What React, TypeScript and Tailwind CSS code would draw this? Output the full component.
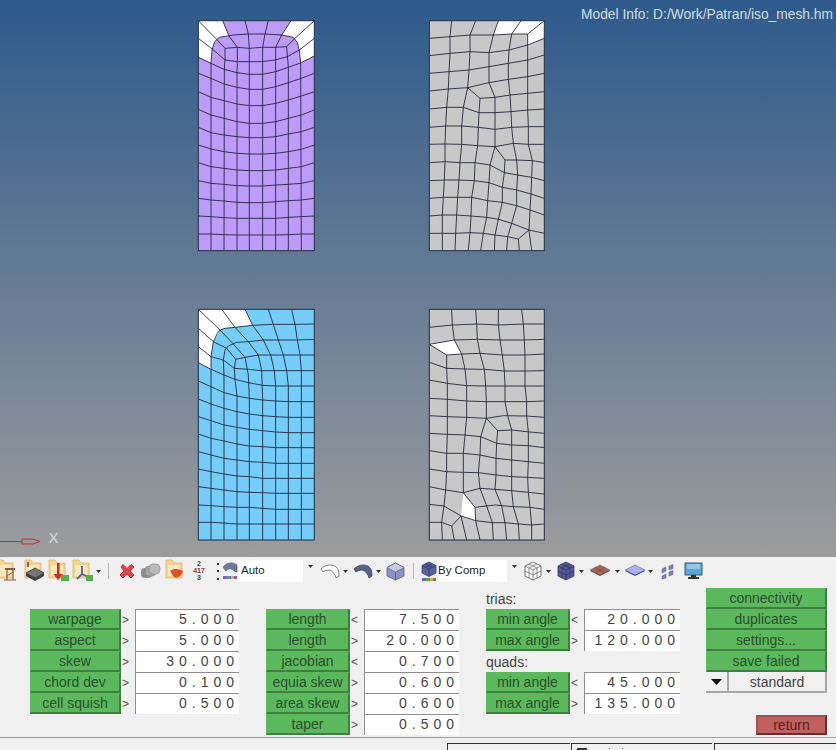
import React from "react";

type Mesh = {
  ox: number;
  oy: number;
  x0: number;
  x1: number;
  y0: number;
  y1: number;
  fill: string;
  holes: string[];
  lines: string[];
};

const cols = [55, 93, 132, 171, 208, 248, 287, 325, 364, 403];
const row = (ys: number[]) => ys.map((y, i) => `${cols[i]},${y}`).join(" ");

const purple: Mesh = {
  ox: 180, oy: 10, x0: 55, x1: 403, y0: 32, y1: 722, fill: "#bd9bfb",
  holes: ["55,32 128,32 147,78 118,82 104,95 96,120 93,158 55,140", "333,32 403,32 403,138 362,158 358,120 352,98 340,82 305,75"],
  lines: [
    row([142, 160, 178, 188, 193, 193, 185, 172, 158, 138]),
    row([190, 205, 222, 232, 238, 238, 230, 218, 205, 190]),
    row([245, 262, 272, 282, 287, 287, 280, 270, 258, 245]),
    row([298, 315, 325, 335, 340, 340, 335, 325, 315, 300]),
    row([352, 368, 375, 380, 383, 383, 380, 372, 365, 352]),
    row([405, 417, 425, 430, 432, 432, 430, 425, 418, 405]),
    row([458, 470, 475, 480, 482, 482, 480, 475, 470, 458]),
    row([512, 520, 523, 527, 528, 528, 525, 523, 520, 512]),
    row([565, 570, 573, 577, 578, 578, 575, 572, 570, 565]),
    row([618, 620, 623, 625, 625, 625, 625, 622, 620, 618]),
    row([672, 672, 674, 675, 675, 675, 675, 674, 672, 672]),
    "98,118 135,150 172,155 208,155 245,155 285,150 322,140 358,120",
    "135,115 172,112 208,115 245,112 285,112 320,110",
    "104,95 118,82 160,75 205,72 255,72 305,75 340,82 352,98",
    "93,722 93,160 96,120 104,95",
    "132,722 133,178 135,150 135,115 110,88 55,32",
    "171,722 171,188 172,155 172,112 147,78 128,32",
    "208,722 208,115 205,72 195,32",
    "248,722 248,112 255,72 265,32",
    "287,722 287,112 305,75 333,32",
    "325,722 325,172 320,110 345,85 403,32",
    "364,722 362,158 358,120 352,98",
    "55,85 98,118",
    "403,85 358,120",
  ],
};

const grayTop: Mesh = {
  ox: 415, oy: 10, x0: 43, x1: 388, y0: 32, y1: 722, fill: "#c8c8c8",
  holes: ["250,32 388,32 388,85 338,105 338,72 290,72 235,75"],
  lines: [
    "43,85 105,80 165,75 235,75 290,72 338,72",
    "43,137 105,130 165,125 222,128 282,120 338,105 388,85",
    "43,190 102,185 162,180 222,170 280,160 338,150 388,135",
    "43,243 100,237 158,233 222,218 280,208 338,200 388,190",
    "158,233 195,265 240,262 285,255 338,250 388,245",
    "43,297 95,292 145,292 192,308 240,308 288,305 338,300 388,297",
    "43,352 92,348 140,348 190,352 240,358 290,352 340,350 388,350",
    "43,403 90,402 140,403 188,407 240,410 295,400 340,403 388,403",
    "43,458 90,455 135,458 180,458 225,465 268,488 308,495 350,502 388,512",
    "270,450 305,450 352,452 388,458",
    "43,512 88,510 132,510 178,512 222,518 262,532 305,540 348,552 388,565",
    "43,565 85,562 128,562 170,562 218,572 262,577 305,587 345,600 388,615",
    "43,618 82,615 125,615 168,618 215,622 250,628 290,640 342,660 388,670",
    "43,670 82,670 122,670 165,668 205,670 240,675 278,680 310,687 342,660",
    "110,32 105,80 105,130 102,185 100,237 95,292 92,348 90,402 90,455 88,510 85,562 82,615 82,670 82,722",
    "182,32 165,75 165,125 162,180 158,233 145,292 140,348 140,403 135,458 132,510 128,562 125,615 122,670 120,722",
    "250,32 235,75 222,128 222,170 222,218 240,262 240,308 240,358 240,410 225,465 222,518 218,572 215,622 205,670 197,722",
    "195,265 192,308 190,352 188,407 180,458 178,512 170,562 168,618 165,668 160,722",
    "318,32 290,72 282,120 280,160 280,208 285,255 288,305 290,352 295,400 305,450 308,495 305,540 305,587 290,640 278,680 275,722",
    "388,32 338,72 338,105 338,150 338,200 338,250 338,300 340,350 340,403 352,452 350,502 348,552 345,600 342,660 350,722",
    "240,410 270,450 268,488 262,532 262,577 250,628 240,675 238,722",
    "310,687 313,722",
  ],
};

const blue: Mesh = {
  ox: 180, oy: 300, x0: 55, x1: 403, y0: 28, y1: 720, fill: "#74cdfb",
  holes: ["55,28 195,28 218,76 165,82 135,85 120,90 100,125 93,170 93,208 55,188"],
  lines: [
    "55,667 100,667 170,672 208,672 248,672 287,672 325,672 364,672 403,672",
    row([615, 617, 620, 622, 622, 625, 628, 628, 628, 628]),
    row([560, 565, 570, 575, 577, 578, 580, 580, 580, 580]),
    row([507, 515, 522, 528, 530, 535, 535, 535, 535, 535]),
    row([455, 465, 475, 480, 485, 487, 490, 490, 490, 490]),
    row([402, 415, 423, 432, 438, 440, 443, 443, 443, 443]),
    row([350, 362, 375, 382, 388, 392, 396, 398, 398, 398]),
    row([297, 312, 325, 335, 342, 347, 350, 352, 352, 352]),
    row([243, 260, 278, 288, 295, 300, 303, 305, 305, 305]),
    "55,188 93,208 132,225 165,238 205,248 248,256 287,258 325,258 364,258 403,258",
    "55,140 93,170 130,180 163,205 205,208 245,212 283,212 320,212 364,212 403,212",
    "55,85 100,125 140,145 167,178 195,172 235,165 272,165 310,165 360,165 403,165",
    "132,720 132,225 130,180 135,150 145,138 170,127 205,125 250,120 295,120 352,120 403,118",
    "93,720 93,170 100,125 112,100 120,90 135,85 165,82 218,76 280,73 345,73 403,72",
    "171,720 171,288 165,238 163,205 167,178",
    "55,28 120,90 160,132 195,172 205,225 208,295 208,720",
    "125,28 165,82 205,125 235,165 245,212 248,300 248,720",
    "195,28 218,76 250,120 272,165 283,212 287,258 287,720",
    "265,28 280,73 295,120 310,165 320,212 325,258 325,720",
    "335,28 345,73 352,120 360,165 364,212 364,720",
  ],
};

const grayBottom: Mesh = {
  ox: 415, oy: 300, x0: 43, x1: 388, y0: 28, y1: 720, fill: "#c8c8c8",
  holes: ["43,133 118,120 140,162 95,165", "145,583 180,622 182,662 138,648"],
  lines: [
    "43,82 112,75 185,72 250,75 325,72 388,72",
    "43,133 118,120 187,118 255,120 328,120 388,118",
    "43,133 95,165 140,162 195,160 262,165 330,165 388,162",
    "43,187 95,205 150,207 208,208 268,213 330,213 388,212",
    "43,240 97,250 155,257 212,258 270,258 330,258 388,258",
    "43,295 97,298 155,303 214,305 270,305 335,305 388,303",
    "43,347 97,350 155,352 214,355 265,347 335,348 388,352",
    "43,400 97,403 150,405 197,410 245,430 290,435 340,437 388,443",
    "43,452 95,460 145,460 195,465 243,475 290,480 340,485 388,490",
    "43,507 95,515 145,517 190,518 243,525 290,530 338,532 388,535",
    "43,560 92,570 145,578 195,565 240,568 290,572 340,577 388,582",
    "43,613 87,618 138,648 182,662 232,668 270,668 310,672 350,675 388,672",
    "180,622 240,615 295,620 345,622 388,628",
    "43,667 80,667 110,678 138,648",
    "248,392 290,390 335,395 388,400",
    "110,28 112,75 118,120 140,162 150,207 155,257 155,303 155,352 150,405 145,460 145,517 145,578 180,622 182,662 195,720",
    "182,28 185,72 187,118 195,160 208,208 212,258 214,305 214,355 197,410 195,465 190,518 195,565 215,618 232,668 235,720",
    "250,28 250,75 255,120 262,165 268,213 270,258 270,305 278,347 290,390 290,435 290,480 290,530 290,572 295,620 310,672 313,720",
    "214,355 248,392 245,430 243,475 243,525 240,568 260,618 270,668 275,720",
    "320,28 325,72 328,120 330,165 330,213 330,258 335,305 335,348 340,395 340,437 340,485 338,532 340,577 345,622 350,675 350,720",
    "95,165 95,205 97,250 97,298 97,350 97,403 95,460 95,515 92,570 87,618 80,667 82,720",
    "138,648 155,720",
    "110,678 118,720",
  ],
};

function MeshDrawing({ m }: { m: Mesh }) {
  const w = m.x1 - m.x0;
  const h = m.y1 - m.y0;
  return (
    <g transform={`translate(${m.ox} ${m.oy}) scale(${1 / 3})`}>
      <rect x={m.x0} y={m.y0} width={w} height={h} fill={m.fill} />
      {m.holes.map((p) => (
        <polygon key={p} points={p} fill="#ffffff" />
      ))}
      {m.lines.map((p) => (
        <polyline key={p} points={p} fill="none" stroke="#1c2030" strokeOpacity={0.85} strokeWidth={3} strokeLinejoin="round" />
      ))}
      <rect x={m.x0} y={m.y0} width={w} height={h} fill="none" stroke="#26384c" strokeWidth={3.3} />
    </g>
  );
}

function Caret() {
  return (
    <svg width="5" height="3" viewBox="0 0 5 3" className="shrink-0">
      <path d="M0 0H5L2.5 3Z" fill="#333" />
    </svg>
  );
}

function Folder({ children }: { children?: React.ReactNode }) {
  return (
    <svg width="21" height="24" viewBox="0 0 21 24" className="shrink-0">
      <path d="M1 1h6l2 3h8v15H1Z" fill="#f5d690" stroke="#dcb66c" strokeWidth="0.8" />
      <path d="M3 6h12v11H3Z" fill="#fbe9bd" />
      {children}
    </svg>
  );
}

function ShapeIcon({ kind }: { kind: "wire" | "solid" | "brown" | "blue" | "cube" | "shell" | "shellSolid" }) {
  if (kind === "shell" || kind === "shellSolid") {
    const solid = kind === "shellSolid";
    return (
      <svg width="20" height="16" viewBox="0 0 20 16" className="shrink-0">
        <path d="M1 6C5 2 10 1 15 3C18 5 19 8 19 13L16 15C15 11 13 8 9 7C6 7 4 8 3 9Z" fill={solid ? "#5a6288" : "#fff"} stroke={solid ? "#3b4160" : "#666"} strokeWidth="0.8" />
      </svg>
    );
  }
  if (kind === "cube") {
    return (
      <svg width="19" height="19" viewBox="0 0 19 19" className="shrink-0">
        <path d="M9.5 1L18 5.5V14L9.5 18L1 14V5.5Z" fill="#8b92c6" stroke="#565c80" strokeWidth="0.8" />
        <path d="M1 5.5L9.5 10L18 5.5L9.5 1Z" fill="#c5cbe6" stroke="#565c80" strokeWidth="0.6" />
        <path d="M9.5 10V18" stroke="#565c80" strokeWidth="0.8" />
      </svg>
    );
  }
  if (kind === "brown" || kind === "blue") {
    const top = kind === "brown" ? "#a5645a" : "#a9b2ee";
    const side = kind === "brown" ? "#6d4a45" : "#3e4596";
    return (
      <svg width="22" height="14" viewBox="0 0 22 14" className="shrink-0">
        <path d="M11 2L21 7L11 12L1 7Z" fill={side} />
        <path d="M11 1L21 6L11 11L1 6Z" fill={top} stroke={side} strokeWidth="0.5" />
        {kind === "brown" && <path d="M6 3.5L16 8.5M16 3.5L6 8.5" stroke={side} strokeWidth="0.6" />}
      </svg>
    );
  }
  const solid = kind === "solid";
  return (
    <svg width="20" height="20" viewBox="0 0 20 20" className="shrink-0">
      <path d="M10 1L18 5V15L10 19L2 15V5Z" fill={solid ? "#555b99" : "#fbfbfb"} stroke={solid ? "#33376a" : "#555"} strokeWidth="0.8" />
      <path d="M2 5L10 9L18 5M10 9V19M6 3L14 7M14 3L6 7M2 10L10 14L18 10M6 7V17M14 7V17" fill="none" stroke={solid ? "#2b2e5a" : "#666"} strokeWidth="0.7" />
    </svg>
  );
}

function Toolbar() {
  return (
    <div className="flex h-[28px] items-center overflow-hidden bg-[#f0f0f0]">
      <div className="-ml-[4px] w-[26px]">
        <Folder>
          <path d="M9 9h10v2H9Z" fill="#8a5a4a" />
          <path d="M11 21v-10M17 21v-10M8 21h12" fill="none" stroke="#8a5a4a" strokeWidth="1.2" />
          <path d="M11 17L17 13" stroke="#8a5a4a" strokeWidth="1" />
        </Folder>
      </div>
      <div className="ml-[2px] w-[24px]">
        <Folder>
          <path d="M2 14L11 9L20 14L11 19Z" fill="#777" stroke="#333" strokeWidth="0.8" />
          <path d="M2 14V17L11 22L20 17V14L11 19Z" fill="#3f3f3f" />
          <path d="M4 3v5" stroke="#222" strokeWidth="1.2" />
        </Folder>
      </div>
      <div className="w-[24px]">
        <Folder>
          <path d="M9 4h2.5v11H15L10 21L5.5 15H9Z" fill="#d12b1e" />
          <rect x="13" y="16" width="8" height="6" fill="#58b04d" />
        </Folder>
      </div>
      <div className="w-[24px]">
        <Folder>
          <path d="M10 7V15L5 20M10 15L16 18" stroke="#5060a0" strokeWidth="1.8" fill="none" />
          <rect x="14" y="16" width="7" height="6" fill="#58b04d" />
        </Folder>
      </div>
      <Caret />
      <div className="ml-[7px] h-[16px] w-px bg-[#b5b5b5]" />
      <svg width="18" height="18" viewBox="0 0 18 18" className="ml-[9px] shrink-0">
        <path d="M3 5L5 2.5L9 6.5L13 2.5L16 5L12 9L16 13L13 16L9 12L5 16L2 13L6 9Z" fill="#e2434b" stroke="#c73038" strokeWidth="1" />
      </svg>
      <svg width="21" height="18" viewBox="0 0 21 18" className="ml-[4px] shrink-0">
        <rect x="1" y="6" width="11" height="10" rx="4" fill="#8d8d8d" />
        <rect x="5" y="4" width="11" height="10" rx="4" fill="#a6a6a6" stroke="#777" strokeWidth="0.5" />
        <rect x="9" y="2" width="11" height="10" rx="4" fill="#bbbbbb" stroke="#777" strokeWidth="0.5" />
      </svg>
      <div className="ml-[4px] w-[26px]">
        <Folder>
          <path d="M5 12C9 9 14 10 18 12C17 17 12 20 9 18Z" fill="#e2502a" />
        </Folder>
      </div>
      <div className="flex h-[22px] w-[16px] shrink-0 flex-col items-center text-[7px] font-bold leading-[7px] text-[#444]">
        <span>2</span>
        <span>
          <span className="text-[#c52c2c]">4</span>1<span className="text-[#c52c2c]">7</span>
        </span>
        <span>3</span>
      </div>
      <div className="ml-[10px] flex h-[17px] w-[2px] flex-col justify-between">
        <span className="h-[2px] w-[2px] bg-[#333]" />
        <span className="h-[2px] w-[2px] bg-[#333]" />
        <span className="h-[2px] w-[2px] bg-[#333]" />
      </div>
      <svg width="16" height="20" viewBox="0 0 16 20" className="ml-[3px] shrink-0">
        <path d="M1 6C5 1 11 1 15 4L15 11L12 10C10 7 6 7 4 10Z" fill="#6a7aa0" stroke="#45516f" strokeWidth="0.6" />
        <rect x="1" y="15" width="14" height="3" fill="#7c5fd0" />
        <rect x="5" y="15" width="3" height="3" fill="#46b04a" />
        <rect x="9" y="15" width="3" height="3" fill="#e2b32c" />
      </svg>
      <div className="flex h-[22px] w-[65px] items-center bg-white pl-[3px] text-[11.5px] text-[#222]">Auto</div>
      <div className="ml-[5px] flex h-[18px] w-[12px] items-start pt-[3px]">
        <Caret />
      </div>
      <ShapeIcon kind="shell" />
      <div className="ml-[3px] w-[10px]">
        <Caret />
      </div>
      <ShapeIcon kind="shellSolid" />
      <div className="ml-[3px] w-[10px]">
        <Caret />
      </div>
      <ShapeIcon kind="cube" />
      <div className="ml-[8px] h-[16px] w-px bg-[#b5b5b5]" />
      <svg width="18" height="21" viewBox="0 0 18 21" className="ml-[6px] shrink-0">
        <path d="M9 1L16 4.5V12L9 15.5L2 12V4.5Z" fill="#5b5f9e" stroke="#34376b" strokeWidth="0.7" />
        <path d="M2 4.5L9 8L16 4.5M9 8V15.5M5.5 2.8L12.5 6.3M12.5 2.8L5.5 6.3" fill="none" stroke="#2d2f63" strokeWidth="0.7" />
        <rect x="2" y="17" width="14" height="3" fill="#7c5fd0" />
        <rect x="6" y="17" width="3" height="3" fill="#46b04a" />
        <rect x="10" y="17" width="3" height="3" fill="#e2b32c" />
      </svg>
      <div className="flex h-[22px] w-[69px] items-center bg-white text-[11.5px] text-[#222]">By Comp</div>
      <div className="ml-[5px] flex h-[18px] w-[11px] items-start pt-[3px]">
        <Caret />
      </div>
      <ShapeIcon kind="wire" />
      <div className="ml-[3px] w-[10px]">
        <Caret />
      </div>
      <ShapeIcon kind="solid" />
      <div className="ml-[3px] w-[10px]">
        <Caret />
      </div>
      <ShapeIcon kind="brown" />
      <div className="ml-[4px] w-[9px]">
        <Caret />
      </div>
      <ShapeIcon kind="blue" />
      <div className="ml-[2px] w-[13px]">
        <Caret />
      </div>
      <svg width="14" height="15" viewBox="0 0 14 15" className="shrink-0">
        <path d="M1 5L5 3V7L1 9ZM8 2L12 0.5V4.5L8 6ZM1 12L5 10V14L1 15ZM8 8L12 6.5V10.5L8 12Z" fill="#7f84b8" stroke="#555a8c" strokeWidth="0.5" />
      </svg>
      <svg width="19" height="18" viewBox="0 0 19 18" className="ml-[9px] shrink-0">
        <rect x="1" y="1" width="17" height="12" fill="#5fa6d8" stroke="#3b5f7c" />
        <rect x="3" y="2" width="13" height="5" fill="#93c7ea" />
        <path d="M7 13h5v2h3v2H4v-2h3Z" fill="#333" />
      </svg>
    </div>
  );
}

function GreenButton({ label, width }: { label: string; width: string }) {
  return (
    <div className={`flex h-[21px] shrink-0 items-center justify-center border border-b-2 border-r-2 border-[#5cb85c] border-b-[#3f7f40] border-r-[#3f7f40] bg-[#5cb85c] text-[14px] leading-none text-[#27502b] ${width}`}>
      {label}
    </div>
  );
}

function Num({ value, width }: { value: string; width: string }) {
  return (
    <div className={`flex h-[21px] shrink-0 items-center justify-end border-l border-t border-[#8e8e8e] bg-white pb-[1px] text-[14px] tracking-[5px] text-[#444] ${width}`}>
      {value}
    </div>
  );
}

function Row({ label, op, value, bw, sw, iw }: { label: string; op: string; value: string; bw: string; sw: string; iw: string }) {
  return (
    <div className="flex h-[21px] items-center">
      <GreenButton label={label} width={bw} />
      <div className={`pl-[1px] text-[12px] leading-none text-[#555] ${sw}`}>{op}</div>
      <Num value={value} width={iw} />
    </div>
  );
}

function Label({ children }: { children: React.ReactNode }) {
  return <div className="flex h-[21px] items-center text-[14px] leading-none text-[#444]">{children}</div>;
}

export default function App() {
  const col1: [string, string, string][] = [
    ["warpage", ">", "5.000"],
    ["aspect", ">", "5.000"],
    ["skew", ">", "30.000"],
    ["chord dev", ">", "0.100"],
    ["cell squish", ">", "0.500"],
  ];
  const col2: [string, string, string][] = [
    ["length", "<", "7.500"],
    ["length", ">", "20.000"],
    ["jacobian", "<", "0.700"],
    ["equia skew", ">", "0.600"],
    ["area skew", ">", "0.600"],
    ["taper", ">", "0.500"],
  ];
  return (
    <div className="h-[750px] w-[836px] overflow-hidden bg-[#f0f0f0] [font-family:'Liberation_Sans',Arial,sans-serif]">
      <div className="relative h-[557px] bg-gradient-to-b from-[#2d5a8b] to-[#9c9c9c]">
        <svg width="836" height="557" viewBox="0 0 836 557" className="block">
          <MeshDrawing m={purple} />
          <MeshDrawing m={grayTop} />
          <MeshDrawing m={blue} />
          <MeshDrawing m={grayBottom} />
          <path d="M0 541.5H22" stroke="#c03030" strokeWidth="1" />
          <path d="M22 539H33L40 541.5L33 544H22Z" fill="none" stroke="#c03030" strokeWidth="1" />
          <text x="48.5" y="542.5" fontSize="15" fill="#dcdcdc" fontFamily="Liberation Sans, Arial, sans-serif">
            X
          </text>
        </svg>
        <div className="absolute left-[581px] top-[8px] whitespace-nowrap text-[13.8px] leading-none text-[#d3dee9]">
          Model Info: D:/Work/Patran/iso_mesh.hm
        </div>
      </div>
      <Toolbar />
      <div className="flex h-[153px] border-b border-[#a0a0a0] pl-[30px] pt-[3px]">
        <div className="w-[236px] pt-[21px]">
          <div className="w-[209px]">
            {col1.map(([l, o, v]) => (
              <Row key={l} label={l} op={o} value={v} bw="w-[91px]" sw="w-[14px]" iw="w-[104px]" />
            ))}
          </div>
        </div>
        <div className="w-[220px] pt-[21px]">
          <div className="w-[193px]">
            {col2.map(([l, o, v]) => (
              <Row key={l + o} label={l} op={o} value={v} bw="w-[84px]" sw="w-[14px]" iw="w-[95px]" />
            ))}
          </div>
        </div>
        <div className="w-[220px]">
          <Label>trias:</Label>
          <Row label="min angle" op="<" value="20.000" bw="w-[84px]" sw="w-[14px]" iw="w-[96px]" />
          <Row label="max angle" op=">" value="120.000" bw="w-[84px]" sw="w-[14px]" iw="w-[96px]" />
          <Label>quads:</Label>
          <Row label="min angle" op="<" value="45.000" bw="w-[84px]" sw="w-[14px]" iw="w-[96px]" />
          <Row label="max angle" op=">" value="135.000" bw="w-[84px]" sw="w-[14px]" iw="w-[96px]" />
        </div>
        <div className="flex w-[121px] flex-col">
          <GreenButton label="connectivity" width="w-[121px]" />
          <GreenButton label="duplicates" width="w-[121px]" />
          <GreenButton label="settings..." width="w-[121px]" />
          <GreenButton label="save failed" width="w-[121px]" />
          <div className="flex h-[21px] w-[121px]">
            <div className="flex w-[23px] items-center justify-center border-b-2 border-r-2 border-[#a8a8a8] bg-[#f0f0f0]">
              <svg width="11" height="6" viewBox="0 0 11 6">
                <path d="M0 0H11L5.5 6Z" fill="#111" />
              </svg>
            </div>
            <div className="flex flex-1 items-center justify-center border-b-2 border-r-2 border-[#a8a8a8] bg-[#f0f0f0] text-[14px] leading-none text-[#444]">
              standard
            </div>
          </div>
          <div className="mt-[22px] flex h-[20px] w-[71px] items-center justify-center self-end border-2 border-[#6e2b2c] border-l-[#a05050] border-t-[#a05050] bg-[#c0605f] text-[14px] leading-none text-[#5a1f1f]">
            return
          </div>
        </div>
      </div>
      <div className="flex h-[12px] pl-[447px] pt-[5px]">
        <div className="h-[7px] w-[123px] border-l border-t border-[#333]" />
        <div className="ml-[1px] flex h-[7px] w-[141px] items-start border-l border-t border-[#333] pt-[4px]">
          <div className="ml-[5px] h-[2px] w-[10px] bg-[#333]" />
          <div className="ml-[22px] h-px w-px bg-[#777]" />
          <div className="ml-[12px] h-px w-px bg-[#777]" />
        </div>
        <div className="ml-[2px] h-[7px] flex-1 border-l border-t border-[#333]" />
      </div>
    </div>
  );
}
